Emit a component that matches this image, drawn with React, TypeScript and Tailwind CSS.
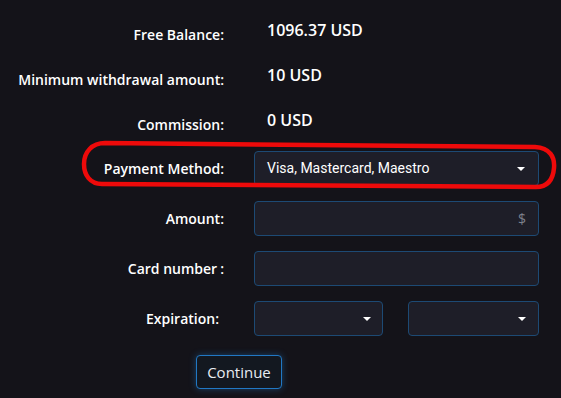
import React from 'react';

const labelCls = "w-[224px] shrink-0 text-right text-[14px] leading-5 font-semibold text-white";
const boxCls = "h-[35px] rounded-[4px] border border-[#1d4a74] bg-[#1e1e28]";

const Caret = () => (
  <span className="h-0 w-0 border-x-[4px] border-t-[4px] border-x-transparent border-t-white" />
);

const InfoRow = ({ label, value }: { label: string; value: string }) => (
  <div className="flex h-[45px] items-start">
    <div className={labelCls + " pt-[12px]"}>{label}</div>
    <div className="ml-[43px] pt-[6px] text-[16px] leading-[22px] font-semibold text-white">{value}</div>
  </div>
);

const FieldRow = ({ label, children, labelPad = '' }: { label: React.ReactNode; children: React.ReactNode; labelPad?: string }) => (
  <div className="flex items-center">
    <div className={labelCls + ' ' + labelPad}>{label}</div>
    <div className="ml-[30px] w-[285px]">{children}</div>
  </div>
);

const App: React.FC = () => {
  return (
    <div
      className="relative h-[398px] w-[561px] overflow-hidden bg-[#141319]"
      style={{ fontFamily: '"Open Sans", "Noto Sans", sans-serif' }}
    >
      <div className="pt-[13px]">
        <InfoRow label="Free Balance:" value="1096.37 USD" />
        <InfoRow label="Minimum withdrawal amount:" value="10 USD" />
        <InfoRow label="Commission:" value="0 USD" />

        <div className="mt-[3px] flex flex-col gap-[15px]">
          <FieldRow label="Payment Method:">
            <div className={boxCls + " flex items-center justify-between pl-[12px] pr-[13px]"}>
              <span className="text-[14px] text-white" style={{ fontFamily: 'Roboto, "Noto Sans", sans-serif' }}>
                Visa, Mastercard, Maestro
              </span>
              <Caret />
            </div>
          </FieldRow>

          <FieldRow label="Amount:">
            <div className={boxCls + " flex items-center justify-end pr-[12px]"}>
              <span className="text-[14px] text-[#7d818c]">$</span>
            </div>
          </FieldRow>

          <FieldRow label={<>Card number<span className="ml-[3px]">:</span></>}>
            <div className={boxCls} />
          </FieldRow>

          <FieldRow label="Expiration:" labelPad="pr-[5px]">
            <div className="grid grid-cols-[129px_131px] gap-[25px]">
              <div className={boxCls + " flex items-center justify-end pr-[11px]"}>
                <Caret />
              </div>
              <div className={boxCls + " flex items-center justify-end pr-[12px]"}>
                <Caret />
              </div>
            </div>
          </FieldRow>
        </div>

        <button className="ml-[196px] mt-[19px] h-[34px] w-[86px] rounded-[4px] border border-[#2178c4] bg-[#131820] text-[15px] text-[#e8ecf2] shadow-[0_0_7px_rgba(33,120,196,0.45)]">
          Continue
        </button>
      </div>

      <svg className="pointer-events-none absolute left-0 top-0" width="561" height="398">
        <path
          d="M105,143 L535,147 C550,148 555,157 554,168 C553,180 548,187 536,187 L102,184 C90,184 84,175 84,164 C84,152 92,143 105,143 Z"
          fill="none"
          stroke="#ee0a0a"
          strokeWidth="4.5"
        />
      </svg>
    </div>
  );
};

export default App;
